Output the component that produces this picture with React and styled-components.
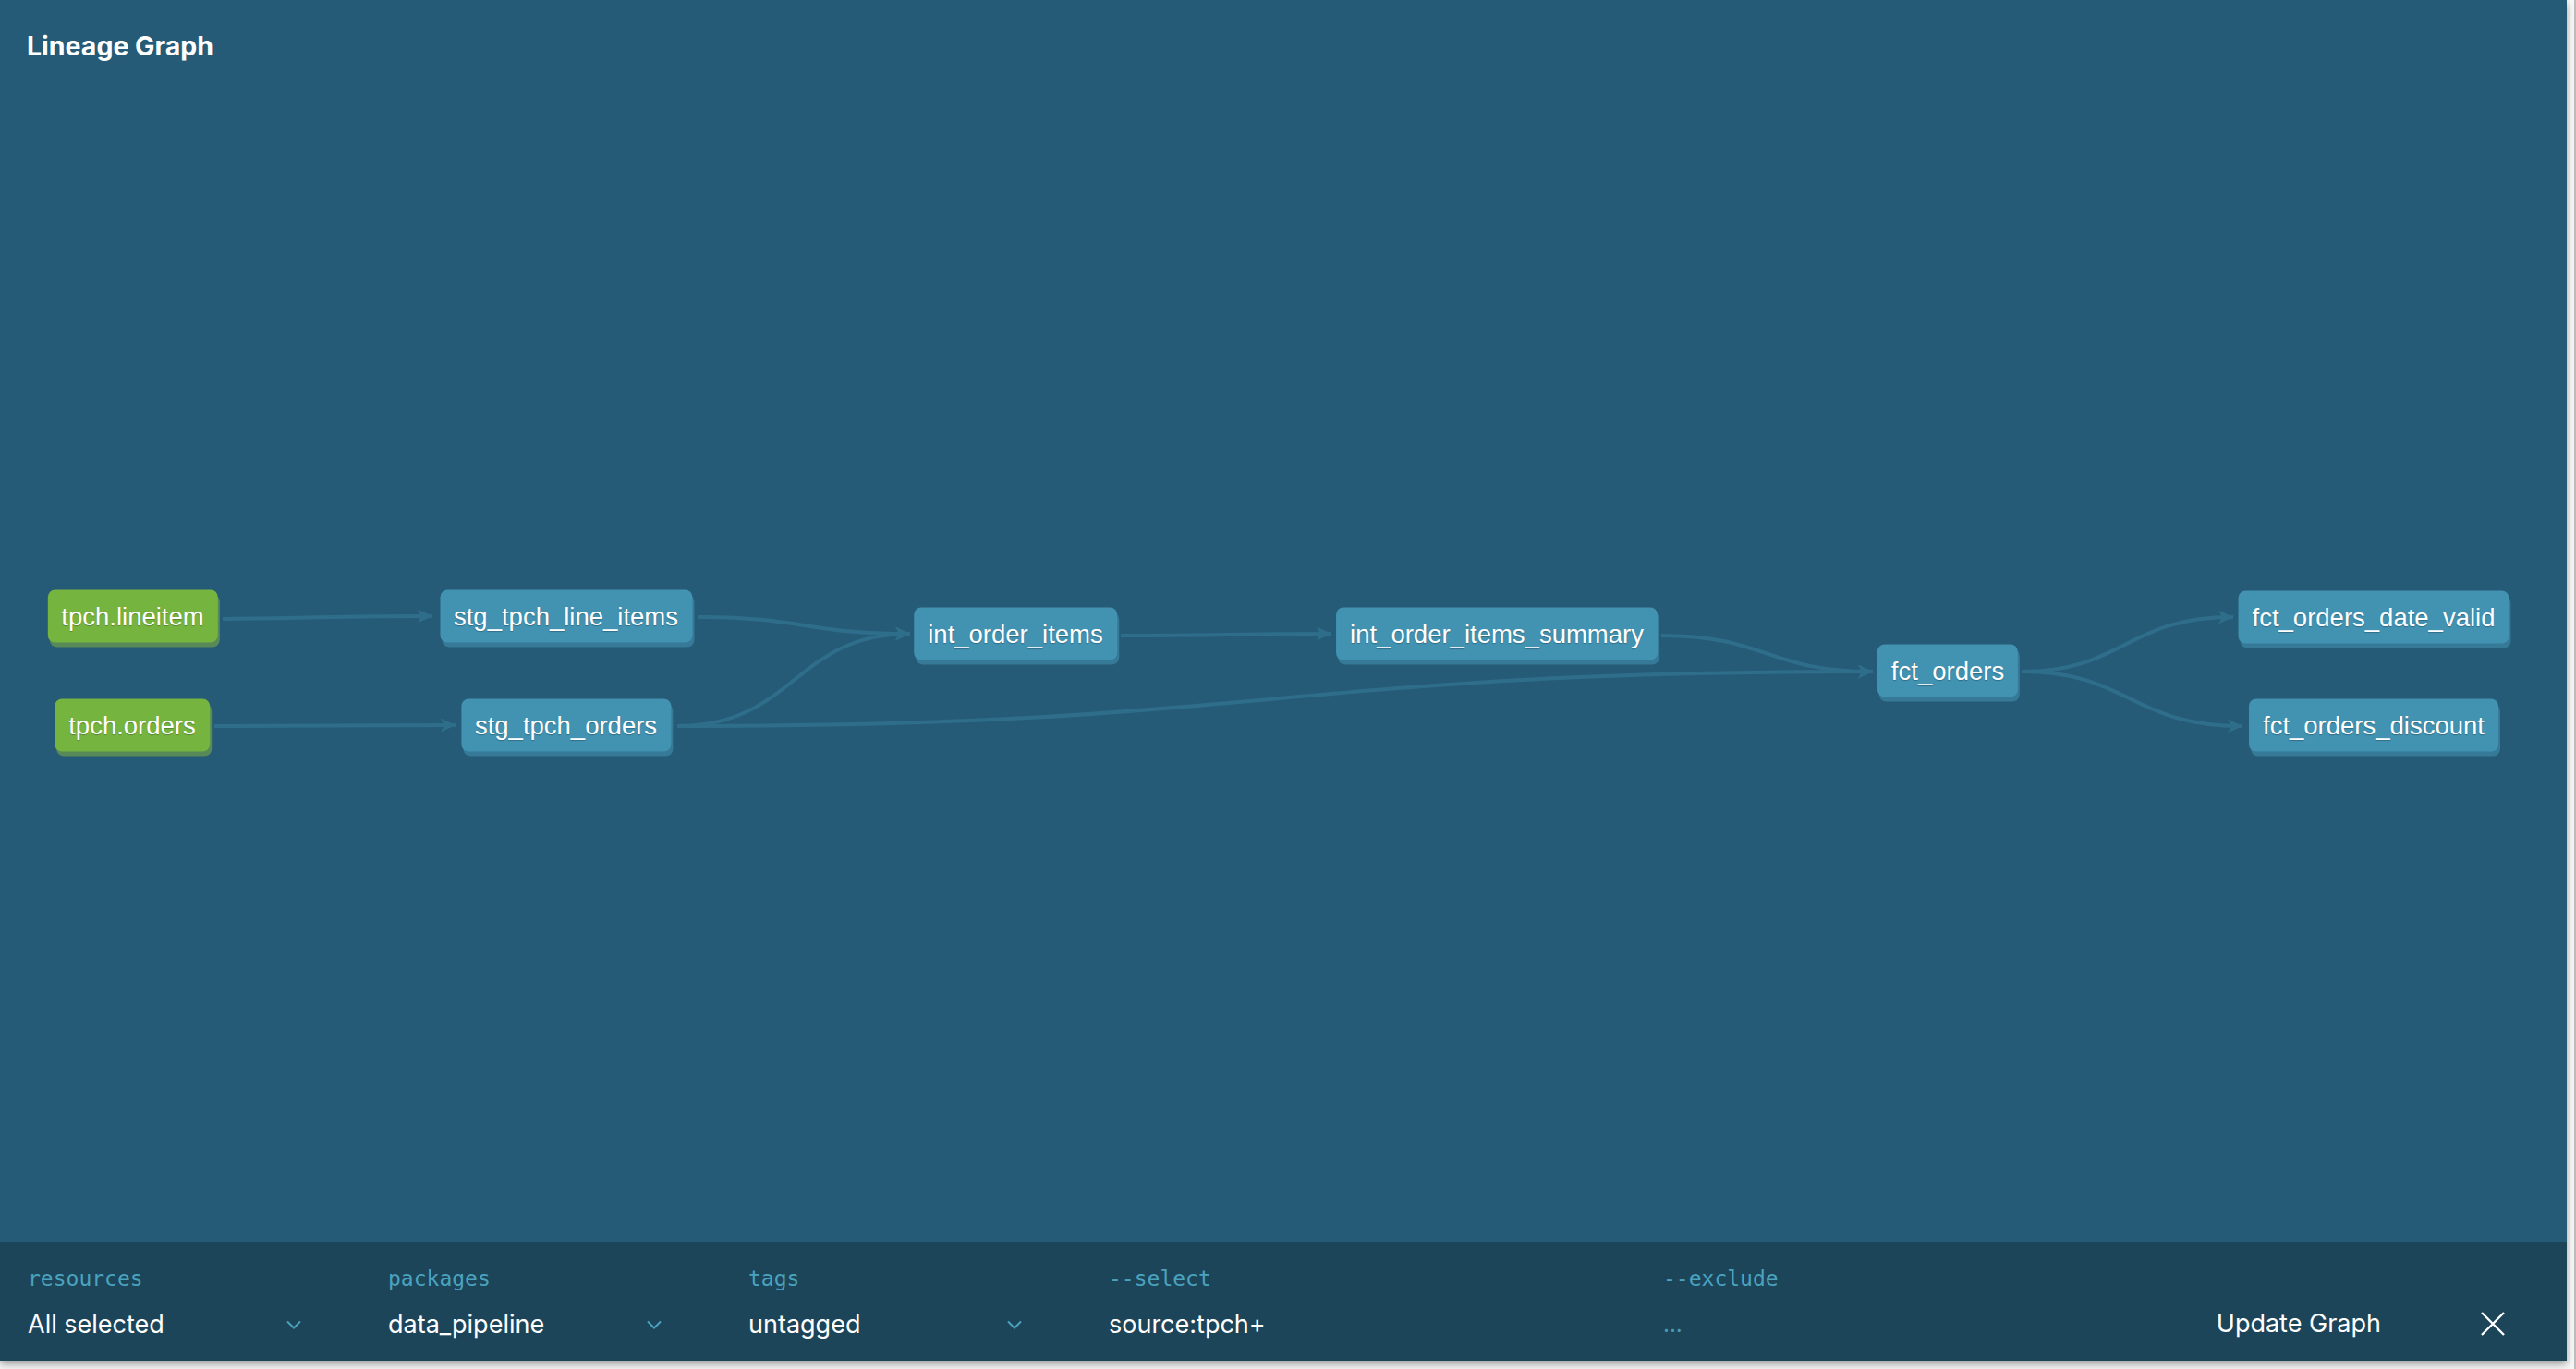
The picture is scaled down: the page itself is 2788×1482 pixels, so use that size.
import React from "react";
import styled, { createGlobalStyle } from "styled-components";

const GlobalStyle = createGlobalStyle`
  html, body {
    margin: 0;
    padding: 0;
  }
  body {
    width: 2788px;
    height: 1482px;
    overflow: hidden;
    background: linear-gradient(to right, #f7f7f7 2786px, #bdbdbd 2786px);
    font-family: "Inter", "Liberation Sans", sans-serif;
  }
`;

const nodes = [
  { id: "lineitem", label: "tpch.lineitem", x: 143.5, y: 667, kind: "source" },
  { id: "orders", label: "tpch.orders", x: 143, y: 784.5, kind: "source" },
  { id: "stg_li", label: "stg_tpch_line_items", x: 612.5, y: 667 },
  { id: "stg_or", label: "stg_tpch_orders", x: 612.5, y: 784.5 },
  { id: "int_oi", label: "int_order_items", x: 1099, y: 685.5 },
  { id: "int_sum", label: "int_order_items_summary", x: 1620, y: 685.5 },
  { id: "fct", label: "fct_orders", x: 2108, y: 726 },
  { id: "fct_dv", label: "fct_orders_date_valid", x: 2569, y: 667.5 },
  { id: "fct_disc", label: "fct_orders_discount", x: 2569, y: 784.5 },
];

const edges = [
  "M241,670 C355,669 355,667 468,667",
  "M232,786 C360,786 360,785 493,785",
  "M755,668 C870,668 870,686 985,686",
  "M733,786 C860,786 860,686 985,686",
  "M733,786 C1380,786 1380,727 2027,727",
  "M1213,688 C1330,688 1330,686 1441,686",
  "M1798,688 C1912,688 1912,727 2027,727",
  "M2188,727 C2300,727 2300,668 2417,668",
  "M2188,727 C2305,727 2305,786 2427,786",
];

const filters = [
  { label: "resources", value: "All selected" },
  { label: "packages", value: "data_pipeline" },
  { label: "tags", value: "untagged" },
];

const App = () => {
  return (
    <>
      <GlobalStyle />
      <Panel>
        <GraphArea>
          <Title>Lineage Graph</Title>
          <Edges width="2778" height="1345" viewBox="0 0 2778 1345">
            <defs>
              <marker
                id="arrow"
                markerUnits="userSpaceOnUse"
                markerWidth="17"
                markerHeight="15"
                refX="16"
                refY="7.5"
                orient="auto"
              >
                <path d="M0,0 L16,7.5 L0,15 L4,7.5 Z" fill="#2f6e8b" />
              </marker>
            </defs>
            {edges.map((d, i) => (
              <path
                key={i}
                d={d}
                fill="none"
                stroke="#2f6e8b"
                strokeWidth="4"
                markerEnd="url(#arrow)"
              />
            ))}
          </Edges>
          {nodes.map((n) => (
            <Node key={n.id} $kind={n.kind} style={{ left: n.x, top: n.y }}>
              {n.label}
            </Node>
          ))}
        </GraphArea>

        <Toolbar>
          {filters.map((f) => (
            <DropColumn key={f.label}>
              <FieldLabel>{f.label}</FieldLabel>
              <SelectRow>
                <FieldValue>{f.value}</FieldValue>
                <Chevron width="16" height="10" viewBox="0 0 16 10">
                  <polyline
                    points="1,1.5 8,8.5 15,1.5"
                    fill="none"
                    stroke="#4aa3be"
                    strokeWidth="2"
                  />
                </Chevron>
              </SelectRow>
            </DropColumn>
          ))}
          <InputColumn $width="600px">
            <FieldLabel>--select</FieldLabel>
            <FieldValue>source:tpch+</FieldValue>
          </InputColumn>
          <InputColumn $grow>
            <FieldLabel>--exclude</FieldLabel>
            <FieldValue $placeholder>...</FieldValue>
          </InputColumn>
          <UpdateButton>Update Graph</UpdateButton>
          <CloseButton aria-label="close">
            <svg width="26" height="26" viewBox="0 0 26 26">
              <path d="M1,1 L25,25 M25,1 L1,25" stroke="#ffffff" strokeWidth="2.4" />
            </svg>
          </CloseButton>
        </Toolbar>
      </Panel>
    </>
  );
};

const Panel = styled.div`
  width: 2778px;
  height: 1473px;
  display: flex;
  flex-direction: column;
  background: #265b77;
  box-shadow: 0 4px 8px rgba(0, 0, 0, 0.35);
`;

const GraphArea = styled.div`
  position: relative;
  flex: 1;
  overflow: hidden;
`;

const Title = styled.h1`
  position: relative;
  z-index: 2;
  margin: 0;
  padding: 32px 0 0 29px;
  font-family: "Inter", "Liberation Sans", sans-serif;
  font-size: 28.5px;
  font-weight: 700;
  color: #ffffff;
`;

const Edges = styled.svg`
  position: absolute;
  top: 0;
  left: 0;
`;

const Node = styled.div`
  position: absolute;
  transform: translate(-50%, -50%);
  height: 57px;
  line-height: 57px;
  padding: 0 15px;
  border-radius: 8px;
  white-space: nowrap;
  font-family: "Liberation Sans", Arial, sans-serif;
  font-size: 27.5px;
  color: #ffffff;
  text-shadow: 0 1px 1px rgba(0, 0, 0, 0.25);
  background: ${(p) => (p.$kind === "source" ? "#76b440" : "#4292b2")};
  box-shadow: 2px 5px 0 ${(p) => (p.$kind === "source" ? "#578a58" : "#367a98")};
`;

const Toolbar = styled.div`
  height: 128px;
  box-sizing: border-box;
  display: flex;
  align-items: flex-start;
  padding: 25px 67px 0 30px;
  background: #1d455a;
`;

const DropColumn = styled.div`
  width: 296px;
  margin-right: 94px;
  display: flex;
  flex-direction: column;
  gap: 19px;
`;

const InputColumn = styled.div`
  width: ${(p) => p.$width || "auto"};
  flex: ${(p) => (p.$grow ? 1 : "none")};
  display: flex;
  flex-direction: column;
  gap: 19px;
`;

const FieldLabel = styled.div`
  height: 28px;
  line-height: 28px;
  font-family: "DejaVu Sans Mono", "Liberation Mono", monospace;
  font-size: 23px;
  color: #4aa3be;
`;

const SelectRow = styled.div`
  display: flex;
  align-items: center;
  justify-content: space-between;
`;

const FieldValue = styled.div`
  height: 33px;
  line-height: 33px;
  font-family: "Inter", "Liberation Sans", sans-serif;
  font-size: 27px;
  color: ${(p) => (p.$placeholder ? "#4a9bb6" : "#ffffff")};
  font-size: ${(p) => (p.$placeholder ? "24px" : "27px")};
`;

const Chevron = styled.svg`
  display: block;
`;

const UpdateButton = styled.button`
  margin-top: 46px;
  padding: 0;
  border: none;
  background: none;
  height: 33px;
  line-height: 33px;
  font-family: "Inter", "Liberation Sans", sans-serif;
  font-size: 27px;
  color: #ffffff;
`;

const CloseButton = styled.button`
  margin: 50px 0 0 108px;
  padding: 0;
  border: none;
  background: none;
  display: flex;
  svg {
    display: block;
  }
`;

export default App;
